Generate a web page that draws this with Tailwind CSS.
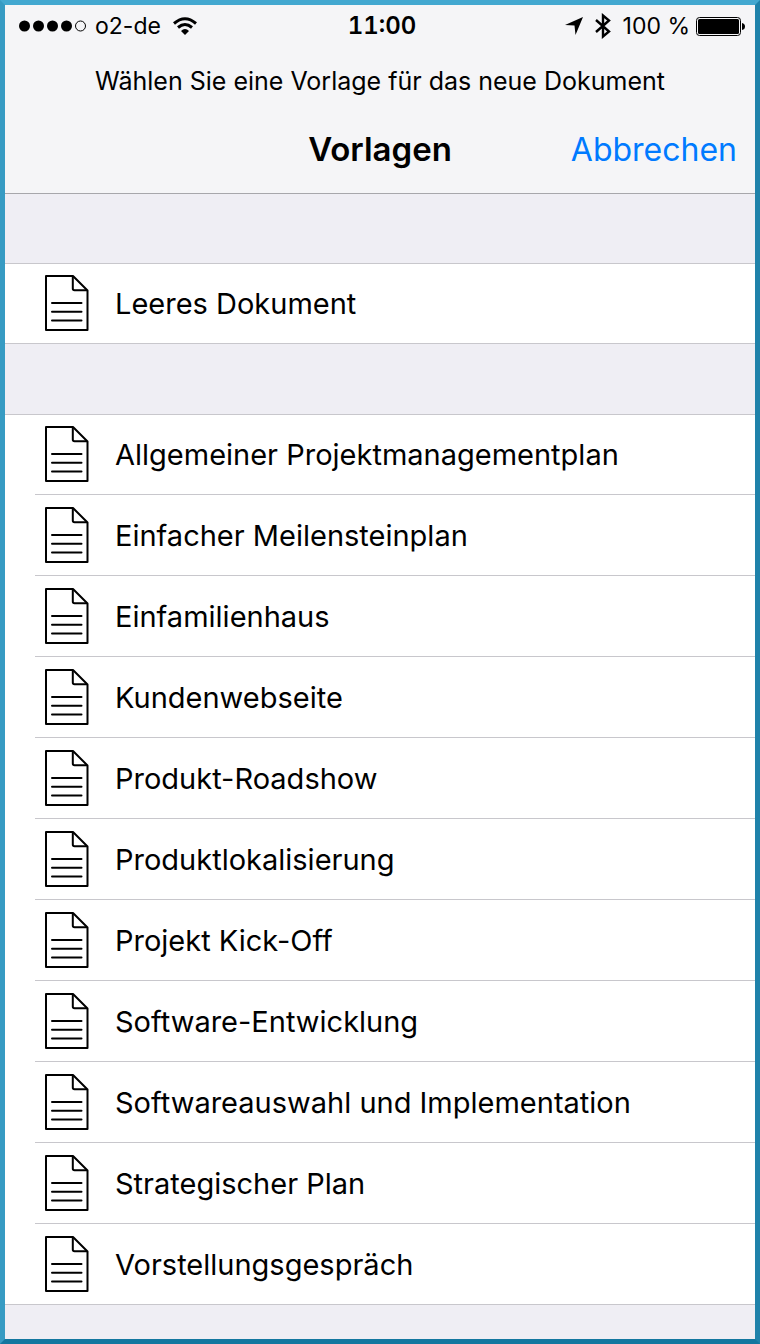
<!DOCTYPE html>
<html lang="de">

<head>
    <meta charset="UTF-8">
    <meta name="viewport" content="width=device-width, initial-scale=1.0">
    <title>Vorlagen</title>
    <script src="https://cdn.jsdelivr.net/npm/@tailwindcss/browser@4"></script>
</head>

<body class="min-h-screen flex flex-col border-5 border-t-[#43a8d0] border-l-[#379bc3] border-r-[#1f82aa] border-b-[#13779f] bg-[#efeef4] text-black font-['Inter',sans-serif]">

    <!-- shared document icon -->
    <svg class="hidden">
        <symbol id="doc" viewBox="0 0 44 56">
            <path d="M1 1H28L42.500 15.500V55H1Z" fill="none" stroke="currentColor" stroke-width="2" stroke-linejoin="round" />
            <path d="M27.800 1V13.500Q27.800 15.300 29.500 15.300H42" fill="none" stroke="currentColor" stroke-width="2" />
            <path d="M7 28H36.500M7 36.700H36.500M7 45.500H36.500" fill="none" stroke="currentColor" stroke-width="2" stroke-linecap="round" />
        </symbol>
    </svg>

    <header class="bg-[#f5f5f7] border-b border-[#a7a7ab]">
        <div class="grid grid-cols-3 items-center h-[42px] pl-3.5 pr-2.5 text-[23px]">
            <div class="flex items-center gap-2">
                <svg class="w-[68px] h-3" viewBox="0 0 68 12">
                    <circle cx="5.500" cy="6" r="5.500" />
                    <circle cx="19.500" cy="6" r="5.500" />
                    <circle cx="33.500" cy="6" r="5.500" />
                    <circle cx="47.500" cy="6" r="5.500" />
                    <circle cx="61.500" cy="6" r="5" fill="none" stroke="currentColor" />
                </svg>
                <span>o2-de</span>
                <svg class="w-6 h-[18px] ml-1" viewBox="0 0 24 18" fill="none" stroke="currentColor" stroke-width="3">
                    <path d="M1 6.500Q12 -3 23 6.500" />
                    <path d="M5 10.500Q12 4.500 19 10.500" />
                    <path d="M8 14Q12 10 16 14L12 18Z" fill="currentColor" stroke="none" />
                </svg>
            </div>
            <span class="text-center text-2xl font-semibold tabular-nums">11:00</span>
            <div class="flex items-center justify-end">
                <svg class="w-[18px] h-[18px] mr-3" viewBox="0 0 18 18">
                    <path d="M18 0L10.500 18L9.500 8.500L0 8Z" />
                </svg>
                <svg class="w-4 h-[26px] mr-3" viewBox="0 0 16 26" fill="none" stroke="currentColor" stroke-width="2.400">
                    <path d="M1 7L14 18.500L8 23.500V2.500L14 7.500L1 19" />
                </svg>
                <span class="whitespace-nowrap">100 %</span>
                <svg class="w-[49px] h-[19px] ml-1.5" viewBox="0 0 49 19">
                    <rect x="0.500" y="0.500" width="44" height="18" rx="3" fill="none" stroke="currentColor" />
                    <rect x="2" y="2" width="41" height="15" rx="1.500" />
                    <path d="M46 6Q49 6.500 49 9.500T46 13Z" />
                </svg>
            </div>
        </div>
        <p class="h-[70px] flex items-center justify-center text-[25px]">Wählen Sie eine Vorlage für das neue Dokument</p>
        <div class="grid grid-cols-[1fr_auto_1fr] items-center h-[76px] px-[18px] pb-2.5">
            <h1 class="col-start-2 text-[33px] font-semibold">Vorlagen</h1>
            <button type="button" class="justify-self-end text-[32px] text-[#007aff] cursor-pointer">Abbrechen</button>
        </div>
    </header>

    <main class="flex flex-col gap-[70px] pt-[69px] text-[29px] leading-[44px]">
        <ul class="bg-white border-y border-[#c8c7cc]">
            <li class="ml-[30px] box-content h-[79px]">
                <a href="#" class="h-full flex items-center gap-[26px] pl-2.5 pb-px"><svg class="w-11 h-14"><use href="#doc" /></svg><span class="pt-0.5">Leeres Dokument</span></a>
            </li>
        </ul>

        <ul class="bg-white border-y border-[#c8c7cc]">
            <li class="ml-[30px] box-content h-[79px] border-b border-[#c8c7cc]">
                <a href="#" class="h-full flex items-center gap-[26px] pl-2.5 pb-px"><svg class="w-11 h-14"><use href="#doc" /></svg><span class="pt-0.5">Allgemeiner Projektmanagementplan</span></a>
            </li>
            <li class="ml-[30px] box-content h-20 border-b border-[#c8c7cc]">
                <a href="#" class="h-full flex items-center gap-[26px] pl-2.5"><svg class="w-11 h-14"><use href="#doc" /></svg><span class="pt-0.5">Einfacher Meilensteinplan</span></a>
            </li>
            <li class="ml-[30px] box-content h-20 border-b border-[#c8c7cc]">
                <a href="#" class="h-full flex items-center gap-[26px] pl-2.5"><svg class="w-11 h-14"><use href="#doc" /></svg><span class="pt-0.5">Einfamilienhaus</span></a>
            </li>
            <li class="ml-[30px] box-content h-20 border-b border-[#c8c7cc]">
                <a href="#" class="h-full flex items-center gap-[26px] pl-2.5"><svg class="w-11 h-14"><use href="#doc" /></svg><span class="pt-0.5">Kundenwebseite</span></a>
            </li>
            <li class="ml-[30px] box-content h-20 border-b border-[#c8c7cc]">
                <a href="#" class="h-full flex items-center gap-[26px] pl-2.5"><svg class="w-11 h-14"><use href="#doc" /></svg><span class="pt-0.5">Produkt-Roadshow</span></a>
            </li>
            <li class="ml-[30px] box-content h-20 border-b border-[#c8c7cc]">
                <a href="#" class="h-full flex items-center gap-[26px] pl-2.5"><svg class="w-11 h-14"><use href="#doc" /></svg><span class="pt-0.5">Produktlokalisierung</span></a>
            </li>
            <li class="ml-[30px] box-content h-20 border-b border-[#c8c7cc]">
                <a href="#" class="h-full flex items-center gap-[26px] pl-2.5"><svg class="w-11 h-14"><use href="#doc" /></svg><span class="pt-0.5">Projekt Kick-Off</span></a>
            </li>
            <li class="ml-[30px] box-content h-20 border-b border-[#c8c7cc]">
                <a href="#" class="h-full flex items-center gap-[26px] pl-2.5"><svg class="w-11 h-14"><use href="#doc" /></svg><span class="pt-0.5">Software-Entwicklung</span></a>
            </li>
            <li class="ml-[30px] box-content h-20 border-b border-[#c8c7cc]">
                <a href="#" class="h-full flex items-center gap-[26px] pl-2.5"><svg class="w-11 h-14"><use href="#doc" /></svg><span class="pt-0.5">Softwareauswahl und Implementation</span></a>
            </li>
            <li class="ml-[30px] box-content h-20 border-b border-[#c8c7cc]">
                <a href="#" class="h-full flex items-center gap-[26px] pl-2.5"><svg class="w-11 h-14"><use href="#doc" /></svg><span class="pt-0.5">Strategischer Plan</span></a>
            </li>
            <li class="ml-[30px] box-content h-20">
                <a href="#" class="h-full flex items-center gap-[26px] pl-2.5"><svg class="w-11 h-14"><use href="#doc" /></svg><span class="pt-0.5">Vorstellungsgespräch</span></a>
            </li>
        </ul>
    </main>

</body>

</html>
